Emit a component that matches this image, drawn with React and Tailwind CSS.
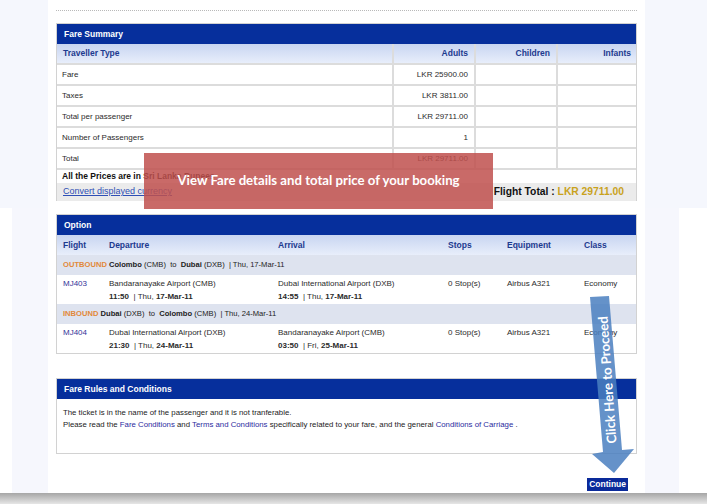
import React from "react";

const fareRows = [
  ["Fare", "LKR 25900.00"],
  ["Taxes", "LKR 3811.00"],
  ["Total per passenger", "LKR 29711.00"],
  ["Number of Passengers", "1"],
  ["Total", "LKR 29711.00"],
];

const legs = [
  {
    dir: "OUTBOUND",
    from: "Colombo",
    fromCode: "(CMB)",
    to: "Dubai",
    toCode: "(DXB)",
    date: "Thu, 17-Mar-11",
    flight: "MJ403",
    depAirport: "Bandaranayake Airport (CMB)",
    depTime: "11:50",
    depDay: "Thu,",
    depDate: "17-Mar-11",
    arrAirport: "Dubai International Airport (DXB)",
    arrTime: "14:55",
    arrDay: "Thu,",
    arrDate: "17-Mar-11",
  },
  {
    dir: "INBOUND",
    from: "Dubai",
    fromCode: "(DXB)",
    to: "Colombo",
    toCode: "(CMB)",
    date: "Thu, 24-Mar-11",
    flight: "MJ404",
    depAirport: "Dubai International Airport (DXB)",
    depTime: "21:30",
    depDay: "Thu,",
    depDate: "24-Mar-11",
    arrAirport: "Bandaranayake Airport (CMB)",
    arrTime: "03:50",
    arrDay: "Fri,",
    arrDate: "25-Mar-11",
  },
];

const optionCols = "grid grid-cols-[46px_169px_170px_59px_77px_1fr] pl-[6px]";

const BoxHeader = ({ children }) => (
  <div className="h-[20px] bg-[#062f9c] text-white font-bold text-[8.5px] pl-[7px] flex items-center">
    {children}
  </div>
);

const FareSummary = () => (
  <div className="border border-[#d2d2d2] border-b-0">
    <BoxHeader>Fare Summary</BoxHeader>
    <div className="grid grid-cols-[335px_82px_82px_1fr] h-[21px] bg-gradient-to-b from-[#c8d5f1] to-[#e8eefb] text-[#1d3a8f] font-bold text-[8.5px] items-center border-b-2 border-[#dcdcdc]">
      <div className="pl-[6px]">Traveller Type</div>
      <div className="h-full flex items-center justify-end pr-[6px] border-l-2 border-[#dcdcdc]">Adults</div>
      <div className="h-full flex items-center justify-end pr-[6px] border-l-2 border-[#dcdcdc]">Children</div>
      <div className="h-full flex items-center justify-end pr-[5px] border-l-2 border-[#dcdcdc]">Infants</div>
    </div>
    {fareRows.map(([label, value]) => (
      <div
        key={label}
        className="grid grid-cols-[335px_82px_82px_1fr] h-[21px] text-[8px] text-[#2b2b2b] border-b-2 border-[#dcdcdc]"
      >
        <div className="flex items-center pl-[5px]">{label}</div>
        <div className="flex items-center justify-end pr-[6px] border-l-2 border-[#dcdcdc]">{value}</div>
        <div className="border-l-2 border-[#dcdcdc]" />
        <div className="border-l-2 border-[#dcdcdc]" />
      </div>
    ))}
    <div className="h-[13px] flex items-center pl-[5px] text-[8.5px] font-bold text-[#111]">
      All the Prices are in Sri Lanka Rupees
    </div>
    <div className="h-[18px] bg-[#ebebeb] flex items-center justify-between pl-[6px] pr-[12px]">
      <span className="text-[9px] underline text-[#2f4fb5]">Convert displayed currency</span>
      <span className="text-[10.3px] font-bold text-[#111]">
        Flight Total : <span className="text-[#c9a21c]">LKR 29711.00</span>
      </span>
    </div>
  </div>
);

const OptionBox = () => (
  <div className="border border-[#d2d2d2]">
    <BoxHeader>Option</BoxHeader>
    <div className={`${optionCols} h-[20px] items-center bg-gradient-to-b from-[#c8d5f1] to-[#e8eefb] text-[#1d3a8f] font-bold text-[8.5px]`}>
      <div>Flight</div>
      <div>Departure</div>
      <div>Arrival</div>
      <div>Stops</div>
      <div>Equipment</div>
      <div>Class</div>
    </div>
    {legs.map((l) => (
      <React.Fragment key={l.flight}>
        <div className="h-[20px] bg-[#dee3ef] flex items-center pl-[6px] text-[7.6px] text-[#222] whitespace-pre">
          <span className="font-bold text-[#e2893a]">{l.dir}</span>
          <span className="font-bold"> {l.from}</span>
          <span> {l.fromCode}  to  </span>
          <span className="font-bold">{l.to}</span>
          <span> {l.toCode}  | {l.date}</span>
        </div>
        <div className={`${optionCols} h-[29px] pt-[2px] text-[8px] text-[#2b2b2b] leading-[13px]`}>
          <div className="text-[#333399]">{l.flight}</div>
          <div>
            <div>{l.depAirport}</div>
            <div className="whitespace-pre">
              <b>{l.depTime}</b>  | {l.depDay} <b>{l.depDate}</b>
            </div>
          </div>
          <div>
            <div>{l.arrAirport}</div>
            <div className="whitespace-pre">
              <b>{l.arrTime}</b>  | {l.arrDay} <b>{l.arrDate}</b>
            </div>
          </div>
          <div>0 Stop(s)</div>
          <div>Airbus A321</div>
          <div>Economy</div>
        </div>
      </React.Fragment>
    ))}
  </div>
);

const FareRules = () => (
  <div className="border border-[#d2d2d2]">
    <BoxHeader>Fare Rules and Conditions</BoxHeader>
    <div className="h-[54px] pl-[6px] pt-[8px] text-[7.8px] leading-[12px] text-[#222]">
      <div>The ticket is in the name of the passenger and it is not tranferable.</div>
      <div>
        Please read the <span className="text-[#2b2ba0]">Fare Conditions</span> and{" "}
        <span className="text-[#2b2ba0]">Terms and Conditions</span> specifically related to your fare, and the
        general <span className="text-[#2b2ba0]">Conditions of Carriage</span> .
      </div>
    </div>
  </div>
);

const ProceedArrow = () => (
  <svg className="absolute left-0 top-0 pointer-events-none" width="707" height="504" viewBox="0 0 707 504">
    <polygon
      points="590,297 609,296 622,450 634,449 614,473 592,454 603,452"
      fill="#4a7fc0"
      fillOpacity="0.85"
    />
    <text
      x="607"
      y="380"
      transform="rotate(-94 607 380)"
      textAnchor="middle"
      dominantBaseline="central"
      fill="#ffffff"
      fontFamily="Lato, 'Open Sans', sans-serif"
      fontWeight="700"
      fontSize="13.2"
    >
      Click Here to Proceed
    </text>
  </svg>
);

export default function App() {
  return (
    <div className="relative w-[707px] h-[504px] overflow-hidden bg-white font-['Liberation_Sans',Arial,sans-serif]">
      {/* upper capture */}
      <div className="flex h-[208px]">
        <div className="w-[48px] bg-[#f5f7fd]" />
        <div className="w-[597px] bg-white px-[8px] pt-[10px]">
          <div className="border-t border-dotted border-[#b9b9b9]" />
          <div className="mt-[12px]">
            <FareSummary />
          </div>
        </div>
        <div className="flex-1 bg-[#f5f7fd]" />
      </div>

      {/* lower capture */}
      <div className="flex h-[285px]">
        <div className="w-[12px] bg-white" />
        <div className="w-[36px] bg-[#f6f7fd]" />
        <div className="w-[597px] bg-white px-[8px] pt-[6px]">
          <OptionBox />
          <div className="mt-[24px]">
            <FareRules />
          </div>
          <div className="flex justify-end pr-[9px] mt-[24px]">
            <div className="h-[13px] px-[2px] bg-[#0a2a9a] text-white font-bold text-[8.5px] flex items-center">
              Continue
            </div>
          </div>
        </div>
        <div className="w-[34px] bg-[#f6f7fd]" />
        <div className="flex-1 bg-white" />
      </div>
      <div className="h-[11px] bg-gradient-to-b from-[#a6a6a6] to-[#e6e6e6]" />

      {/* callout */}
      <div className="absolute left-[144px] top-[153px] w-[349px] h-[56px] bg-[#c0504d]/85 flex items-center justify-center">
        <span className="text-white font-bold text-[13.2px] font-['Lato','Open_Sans',sans-serif]">
          View Fare details and total price of your booking
        </span>
      </div>

      <ProceedArrow />
    </div>
  );
}
